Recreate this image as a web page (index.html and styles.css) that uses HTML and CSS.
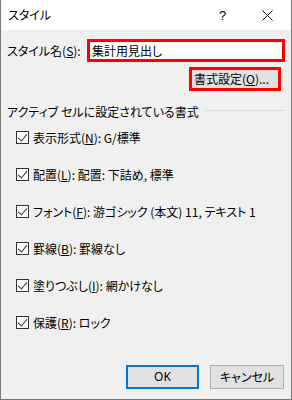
FILE: index.html
```html
<!DOCTYPE html>
<html lang="ja">
<head>
<meta charset="utf-8">
<link rel="stylesheet" href="styles.css">
</head>
<body>
<div class="window">
  <div class="titlebar">
    <span class="title">スタイル</span>
    <span class="help">?</span>
    <span class="close"><svg width="11" height="11" viewBox="0 0 11 11"><path d="M0.5 0.5L10.5 10.5M10.5 0.5L0.5 10.5" stroke="#000" stroke-width="1"/></svg></span>
  </div>
  <div class="body">
    <div class="name-row">
      <span class="label">スタイル名(<u>S</u>):</span>
      <div class="input hl">集計用見出し</div>
    </div>
    <div class="fmt-row">
      <div class="btn fmt hl">書式設定(<u>O</u>)...</div>
    </div>
    <div class="group-head">
      <span class="group-title">アクティブ セルに設定されている書式</span>
      <span class="rule"></span>
    </div>
    <ul class="checks">
      <li><span class="cb"></span><span>表示形式(<u>N</u>): G/標準</span></li>
      <li><span class="cb"></span><span>配置(<u>L</u>): 配置: 下詰め, 標準</span></li>
      <li><span class="cb"></span><span>フォント(<u>F</u>): 游ゴシック (本文) 11, テキスト 1</span></li>
      <li><span class="cb"></span><span>罫線(<u>B</u>): 罫線なし</span></li>
      <li><span class="cb"></span><span>塗りつぶし(<u>I</u>): 網かけなし</span></li>
      <li><span class="cb"></span><span>保護(<u>R</u>): ロック</span></li>
    </ul>
    <div class="actions">
      <div class="btn ok">OK</div>
      <div class="btn cancel">キャンセル</div>
    </div>
  </div>
</div>
</body>
</html>
```
FILE: styles.css
```css
* { box-sizing: border-box; }
html, body { margin: 0; padding: 0; }
body {
  font-family: "Noto Sans CJK JP", "Noto Sans", sans-serif;
  font-size: 12px;
  color: #000;
  font-feature-settings: "palt";
  background: #f0f0f0;
}
.window {
  width: 292px;
  height: 400px;
  background: #f0f0f0;
  border-left: 1px solid #7a7a7a;
  border-right: 1px solid #7a7a7a;
  border-bottom: 1px solid #7a7a7a;
  display: flex;
  flex-direction: column;
}
.titlebar {
  height: 30px;
  background: #fff;
  display: flex;
  align-items: center;
  padding-left: 7px;
  flex: none;
}
.title { flex: 1; font-size: 12px; line-height: 16px; }
.help { width: 8px; margin-right: 35px; font-family: "Liberation Sans", sans-serif; font-size: 13px; }
.close { width: 11px; height: 11px; margin-right: 18px; display: flex; }
.body {
  padding: 0 6px 0 6px;
  display: flex;
  flex-direction: column;
}
u { text-decoration: underline; text-underline-offset: 1px; }
.name-row {
  margin-top: 9px;
  display: flex;
  align-items: center;
  height: 23px;
}
.label { width: 80px; line-height: 16px; }
.input {
  flex: 1;
  height: 23px;
  background: #fff;
  padding-left: 2px;
  line-height: 17px;
  font-size: 12px;
}
.hl { border: 3px solid #ff0000; }
.fmt-row {
  margin-top: 5px;
  display: flex;
  justify-content: flex-end;
  padding-right: 4px;
}
.btn {
  background: #e1e1e1;
  display: flex;
  align-items: center;
  justify-content: center;
  line-height: 16px;
}
.fmt {
  width: 92px;
  height: 24px;
  justify-content: flex-start;
  padding-left: 2px;
}
.group-head {
  margin-top: 14px;
  display: flex;
  align-items: center;
  height: 14px;
}
.group-title { line-height: 14px; white-space: nowrap; }
.rule {
  flex: 1;
  height: 1px;
  background: #dcdcdc;
  margin-left: 5px;
  margin-top: -3px;
}
.checks {
  list-style: none;
  margin: 0;
  padding: 0 0 0 9px;
}
.checks li {
  height: 37px;
  display: flex;
  align-items: center;
  gap: 4px;
  white-space: nowrap;
}
.cb {
  width: 13px;
  height: 13px;
  border: 1px solid #333;
  background: #fff;
  flex: none;
  position: relative;
}
.cb::after {
  content: "";
  position: absolute;
  left: 3px;
  top: 0px;
  width: 4px;
  height: 8px;
  border-right: 1px solid #333;
  border-bottom: 1px solid #333;
  transform: rotate(40deg);
}
.actions {
  margin-top: 24px;
  display: flex;
  justify-content: flex-end;
  gap: 11px;
  padding-right: 1px;
}
.ok {
  width: 73px;
  height: 24px;
  border: 2px solid #0078d7;
  font-family: "Noto Sans", sans-serif;
}
.cancel {
  width: 74px;
  height: 24px;
  border: 1px solid #adadad;
}
```
